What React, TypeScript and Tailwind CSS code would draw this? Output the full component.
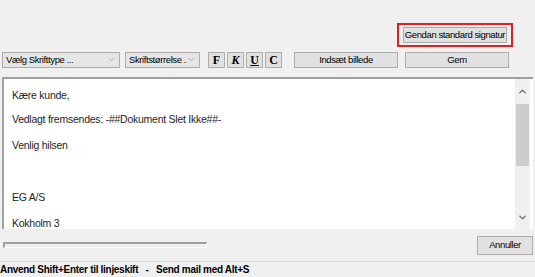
import { ChevronDown, ChevronUp } from 'lucide-react';

const ui = { fontFamily: '"Liberation Sans", Arial, sans-serif' };
const arial = { fontFamily: '"Liberation Sans", Arial, sans-serif' };
const serif = { fontFamily: '"Liberation Serif", "Times New Roman", serif' };

function Btn({ label, className }: { label: string; className: string }) {
  return (
    <div
      className={`flex items-center justify-center whitespace-nowrap border border-[#adadad] bg-[#e1e1e1] text-[9.5px] tracking-[-0.4px] text-black ${className}`}
      style={ui}
    >
      {label}
    </div>
  );
}

function Select({ label, className }: { label: string; className: string }) {
  return (
    <div
      className={`flex items-center justify-between whitespace-nowrap border border-[#adadad] bg-[#e5e5e5] pl-[3px] pr-[3px] text-[9.5px] tracking-[-0.4px] text-black ${className}`}
      style={ui}
    >
      <span className="overflow-hidden">{label}</span>
      <ChevronDown size={9} strokeWidth={1.2} className="shrink-0 text-[#777]" />
    </div>
  );
}

function Fmt({ children, extra }: { children: string; extra?: string }) {
  return (
    <div
      className={`flex h-[16px] w-[17px] items-center justify-center border border-[#adadad] bg-[#e1e1e1] text-[12px] font-bold text-black ${extra ?? ''}`}
      style={serif}
    >
      {children}
    </div>
  );
}

export default function App(): JSX.Element {
  return (
    <div className="flex h-[277px] w-[535px] flex-col overflow-hidden bg-[#f0f0f0]">
      <div className="flex h-[52px] items-start justify-end pr-[22px] pt-[23px]">
        <div className="border-2 border-[#e02020] px-[4px] py-[2px]">
          <Btn label="Gendan standard signatur" className="h-[16px] w-[104px]" />
        </div>
      </div>
      <div className="flex h-[25px] items-start pl-[2px]">
        <Select label="Vælg Skrifttype ..." className="h-[16px] w-[118px]" />
        <Select label="Skriftstørrelse ." className="ml-[5px] h-[16px] w-[75px]" />
        <div className="ml-[8px] flex gap-[2px]">
          <Fmt>F</Fmt>
          <Fmt extra="italic">K</Fmt>
          <Fmt extra="underline">U</Fmt>
          <Fmt>C</Fmt>
        </div>
        <Btn label="Indsæt billede" className="ml-[12px] h-[16px] w-[104px]" />
        <Btn label="Gem" className="ml-[7px] h-[16px] w-[104px]" />
      </div>
      <div className="mx-[2px] flex h-[153px] overflow-hidden border-l-2 border-t-2 border-[#a0a0a0] bg-white pr-[3px]">
        <div className="flex-1 pl-[8px] pt-[10px] text-[10.5px] leading-[13px] tracking-[-0.25px] text-[#1e1e1e]" style={arial}>
          <p className="h-[24px]">Kære kunde,</p>
          <p className="h-[26px]">Vedlagt fremsendes: -##Dokument Slet Ikke##-</p>
          <p className="h-[52px]">Venlig hilsen</p>
          <p className="h-[26px]">EG A/S</p>
          <p>Kokholm 3</p>
        </div>
        <div className="flex w-[15px] flex-col bg-[#f0f0f0]">
          <div className="flex h-[25px] items-center justify-center">
            <ChevronUp size={11} strokeWidth={2.5} className="text-[#606060]" />
          </div>
          <div className="mx-[1px] h-[62px] bg-[#cdcdcd]" />
          <div className="flex-1" />
          <div className="flex h-[24px] items-center justify-center">
            <ChevronDown size={11} strokeWidth={2.5} className="text-[#606060]" />
          </div>
        </div>
      </div>
      <div className="flex h-[32px] items-center justify-between pl-[3px] pr-[2px]">
        <div className="h-[6px] w-[204px] border-b border-l-2 border-r border-t-2 border-[#a0a0a0] border-b-white border-r-white bg-[#f0f0f0]" />
        <Btn label="Annuller" className="h-[19px] w-[56px]" />
      </div>
      <div className="flex flex-1 items-center border-t border-[#d7d7d7] text-[10px] font-bold tracking-[-0.3px] text-black" style={ui}>
        <span className="whitespace-pre">Anvend Shift+Enter til linjeskift   -   Send mail med Alt+S</span>
      </div>
    </div>
  );
}
